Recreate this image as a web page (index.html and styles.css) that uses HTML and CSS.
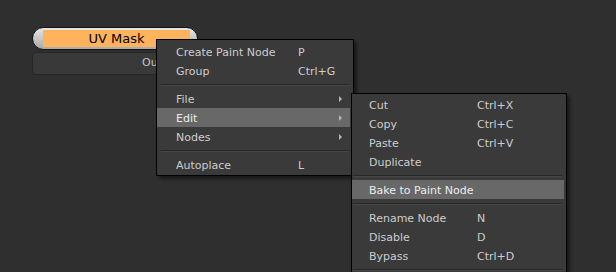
FILE: index.html
```html
<!DOCTYPE html>
<html lang="en">
<head>
    <meta charset="UTF-8">
    <title>Node Graph</title>
    <link rel="stylesheet" href="styles.css">
</head>
<body>
    <div class="graph">
        <div class="node">
            <div class="node-pill"><div class="node-label">UV Mask</div></div>
            <div class="node-out">Output</div>
        </div>

        <div class="menu menu-main">
            <div class="item"><span>Create Paint Node</span><span>P</span></div>
            <div class="item"><span>Group</span><span>Ctrl+G</span></div>
            <div class="sep"></div>
            <div class="item"><span>File</span><span></span><span class="arrow"></span></div>
            <div class="item active"><span>Edit</span><span></span><span class="arrow"></span></div>
            <div class="item"><span>Nodes</span><span></span><span class="arrow"></span></div>
            <div class="sep"></div>
            <div class="item"><span>Autoplace</span><span>L</span></div>
        </div>

        <div class="menu menu-sub">
            <div class="item"><span>Cut</span><span>Ctrl+X</span></div>
            <div class="item"><span>Copy</span><span>Ctrl+C</span></div>
            <div class="item"><span>Paste</span><span>Ctrl+V</span></div>
            <div class="item"><span>Duplicate</span><span></span></div>
            <div class="sep"></div>
            <div class="item active"><span>Bake to Paint Node</span><span></span></div>
            <div class="sep"></div>
            <div class="item"><span>Rename Node</span><span>N</span></div>
            <div class="item"><span>Disable</span><span>D</span></div>
            <div class="item"><span>Bypass</span><span>Ctrl+D</span></div>
            <div class="sep"></div>
        </div>
    </div>
</body>
</html>
```

FILE: styles.css
```css
body {
    margin: 0;
    background-color: #2f2f2f;
    font-family: "DejaVu Sans", Verdana, sans-serif;
}
.graph {
    position: relative;
    width: 616px;
    height: 272px;
    overflow: hidden;
    background-color: #2f2f2f;
}
.node {
    position: absolute;
    left: 32px;
    top: 27px;
    width: 166px;
}
.node-pill {
    height: 23px;
    box-sizing: border-box;
    border: 1px solid #151515;
    border-radius: 12px;
    background: linear-gradient(#e6e6e6, #a9a9a9);
    padding: 2px 7px 2px 10px;
}
.node-label {
    height: 17px;
    background-color: #ffb35c;
    color: #000;
    font-size: 13px;
    line-height: 18px;
    text-align: center;
}
.node-out {
    margin-top: 2px;
    height: 23px;
    box-sizing: border-box;
    border: 1px solid #262626;
    border-radius: 4px;
    background-color: #393939;
    color: #c4c4c4;
    font-size: 11px;
    line-height: 20px;
    padding-left: 109px;
}
.menu {
    position: absolute;
    box-sizing: border-box;
    background-color: #3a3a3a;
    border: 1px solid #000;
    box-shadow: 3px 3px 3px rgba(0, 0, 0, 0.45);
    font-size: 11px;
    color: #cdcdcd;
}
.menu-main {
    left: 156px;
    top: 39px;
    width: 198px;
    padding: 2px 0 1px 0;
}
.menu-sub {
    left: 351px;
    top: 93px;
    width: 216px;
    height: 200px;
    padding-top: 1px;
}
.item {
    display: grid;
    box-sizing: border-box;
    height: 19px;
    padding-top: 1px;
    align-items: center;
    white-space: nowrap;
}
.menu-main .item {
    grid-template-columns: 122px 1fr 3px;
    padding-left: 19px;
    padding-right: 8px;
    margin-right: 3px;
}
.menu-sub .item {
    grid-template-columns: 108px 1fr;
    padding-left: 17px;
    margin-right: 2px;
}
.item.active {
    background-color: #686868;
    color: #ececec;
}
.arrow {
    width: 0;
    height: 0;
    border-left: 3px solid #b4b4b4;
    border-top: 3px solid transparent;
    border-bottom: 3px solid transparent;
}
.sep {
    margin: 4px 3px 3px 3px;
    border-top: 1px solid #272727;
    border-bottom: 1px solid #474747;
}
.menu-main .sep {
    margin-left: 4px;
    margin-right: 4px;
}
.menu-sub .sep {
    margin-left: 1px;
    margin-right: 4px;
}
```
